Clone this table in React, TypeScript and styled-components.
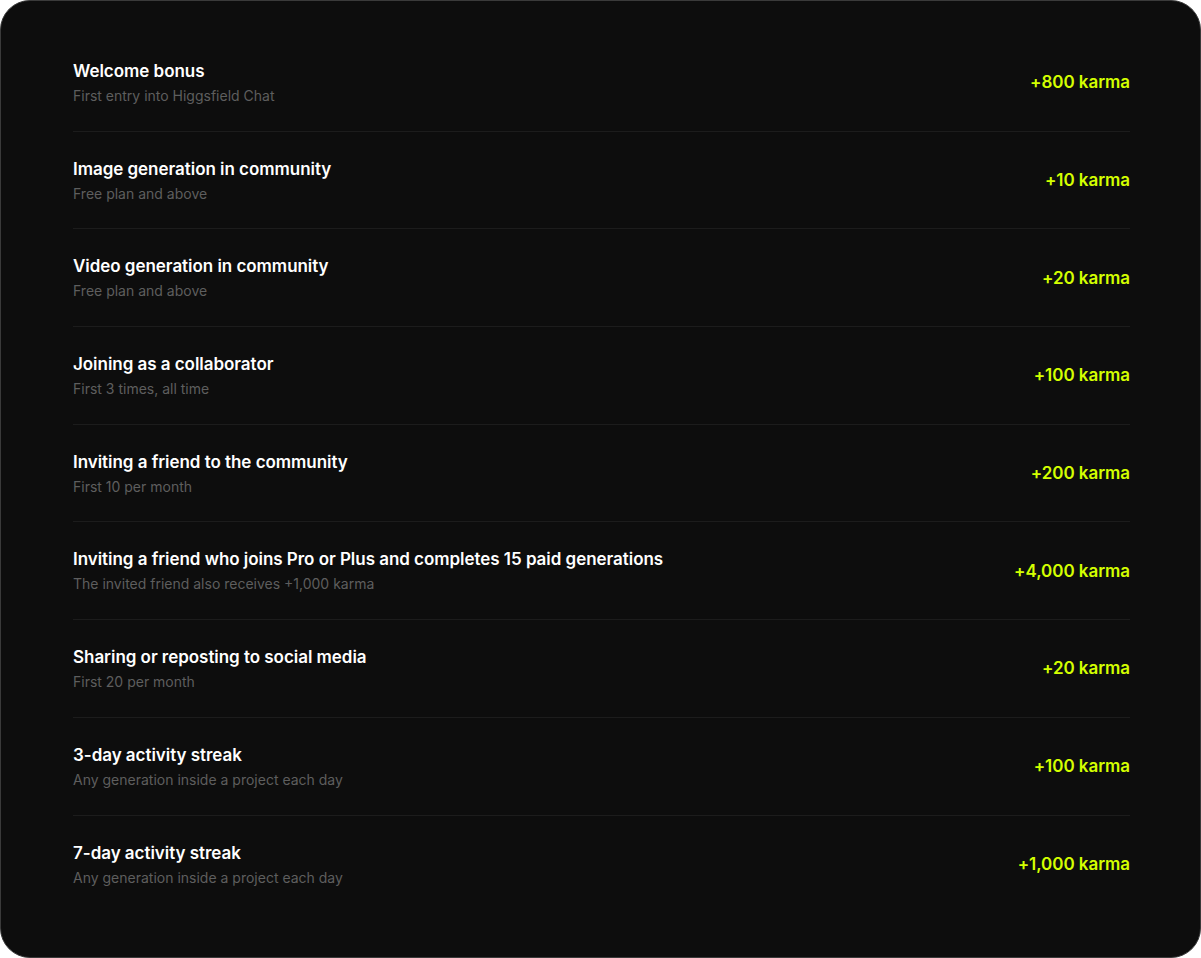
import styled, { createGlobalStyle } from 'styled-components';

interface Reward {
  title:    string;
  note:     string;
  amount:   string;
}

const REWARDS: Reward[] = [
  { title: 'Welcome bonus', note: 'First entry into Higgsfield Chat', amount: '+800 karma' },
  { title: 'Image generation in community', note: 'Free plan and above', amount: '+10 karma' },
  { title: 'Video generation in community', note: 'Free plan and above', amount: '+20 karma' },
  { title: 'Joining as a collaborator', note: 'First 3 times, all time', amount: '+100 karma' },
  { title: 'Inviting a friend to the community', note: 'First 10 per month', amount: '+200 karma' },
  {
    title:  'Inviting a friend who joins Pro or Plus and completes 15 paid generations',
    note:   'The invited friend also receives +1,000 karma',
    amount: '+4,000 karma',
  },
  { title: 'Sharing or reposting to social media', note: 'First 20 per month', amount: '+20 karma' },
  { title: '3-day activity streak', note: 'Any generation inside a project each day', amount: '+100 karma' },
  { title: '7-day activity streak', note: 'Any generation inside a project each day', amount: '+1,000 karma' },
];

const App = () => {
  return (
    <>
      <GlobalStyle />
      <StyledPanel>
        <StyledList>
          {REWARDS.map((r) => (
            <StyledRow key={r.title}>
              <StyledText>
                <StyledTitle>{r.title}</StyledTitle>
                <StyledNote>{r.note}</StyledNote>
              </StyledText>
              <StyledAmount>{r.amount}</StyledAmount>
            </StyledRow>
          ))}
        </StyledList>
      </StyledPanel>
    </>
  );
};

export default App;

const GlobalStyle = createGlobalStyle`
  html, body {
    margin: 0;
    padding: 0;
    background: #ffffff;
  }
  body {
    font-family: Inter, 'Noto Sans', sans-serif;
    -webkit-font-smoothing: antialiased;
  }
`;

const StyledPanel = styled.div`
  box-sizing: border-box;
  width: 1201px;
  height: 958px;
  padding: 33px 70px 0 72px;
  background: #0d0d0d;
  border: 1px solid #3a3a3a;
  border-radius: 30px;
`;

const StyledList = styled.ul`
  margin: 0;
  padding: 0;
  list-style: none;
`;

const StyledRow = styled.li`
  box-sizing: border-box;
  display: flex;
  align-items: center;
  justify-content: space-between;
  height: 97.7px;
  border-bottom: 1px solid #1c1c1c;
  &:last-child {
    border-bottom: none;
  }
`;

const StyledText = styled.div`
  display: flex;
  flex-direction: column;
  gap: 3px;
`;

const StyledTitle = styled.p`
  margin: 0;
  font-size: 17px;
  line-height: 24px;
  font-weight: 600;
  color: #ffffff;
  letter-spacing: -0.04px;
`;

const StyledNote = styled.p`
  margin: 0;
  font-size: 14px;
  line-height: 20px;
  font-weight: 400;
  color: #5e5e5e;
`;

const StyledAmount = styled.span`
  font-size: 17px;
  line-height: 24px;
  font-weight: 600;
  color: #d4ff00;
  letter-spacing: -0.05px;
`;
